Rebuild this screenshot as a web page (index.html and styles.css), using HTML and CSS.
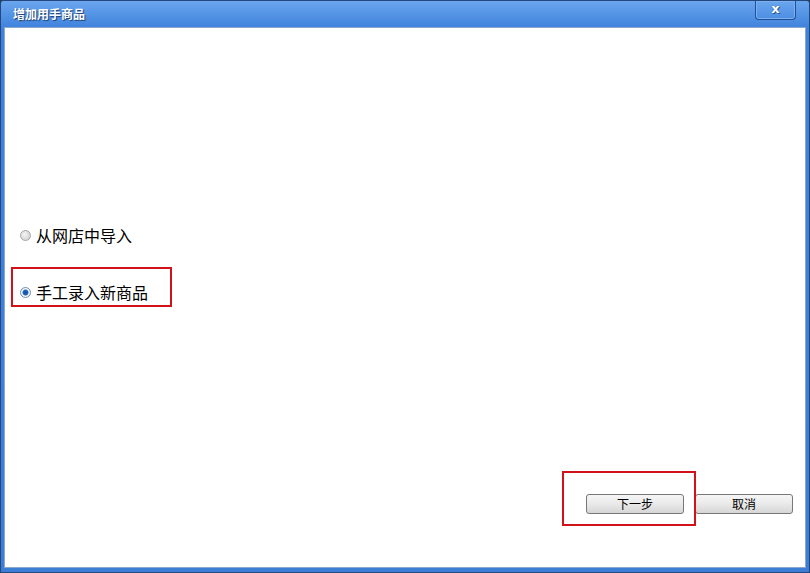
FILE: index.html
```html
<!DOCTYPE html>
<html>
<head>
<meta charset="utf-8">
<link rel="stylesheet" href="styles.css">
</head>
<body>
<div class="window">
  <div class="titlebar">
    <span class="title">增加用手商品</span>
    <span class="close">x</span>
  </div>
  <div class="content">
    <div class="options">
      <label class="option first"><span class="radio"></span><span>从网店中导入</span></label>
      <label class="option selected-box"><span class="radio checked"></span><span>手工录入新商品</span></label>
    </div>
    <div class="buttons">
      <div class="btn-wrap">
        <button class="btn">下一步</button>
        <span class="highlight"></span>
      </div>
      <button class="btn">取消</button>
    </div>
  </div>
</div>
</body>
</html>
```

FILE: styles.css
```css
* { box-sizing: border-box; }
html, body { margin: 0; padding: 0; }
body {
  width: 810px;
  height: 573px;
  overflow: hidden;
  font-family: "Noto Sans CJK SC", "Liberation Sans", sans-serif;
  background: #2d3a4a;
}
.window {
  width: 810px;
  height: 573px;
  display: flex;
  flex-direction: column;
  background: linear-gradient(to bottom, #6aa6ee 0px, #3f82dc 27px, #3c7dd6 100%);
  border: 1px solid #23477e;
  border-radius: 3px 3px 0 0;
  padding: 0 3px 4px 3px;
}
.titlebar {
  height: 26px;
  display: flex;
  align-items: center;
  justify-content: space-between;
  padding: 0 0 0 9px;
  position: relative;
}
.title {
  color: #ffffff;
  font-size: 12px;
  font-weight: bold;
  text-shadow: 1px 1px 1px #1c3c70;
  margin-top: -2px;
}
.close {
  width: 41px;
  height: 19px;
  margin-top: -7px;
  margin-right: 10px;
  border: 1px solid #1f4f96;
  border-top: none;
  border-radius: 0 0 4px 4px;
  box-shadow: inset 0 0 0 1px #7fb0ee;
  color: #ffffff;
  font-family: "DejaVu Sans", sans-serif;
  font-weight: bold;
  font-size: 13px;
  line-height: 15px;
  text-align: center;
  text-shadow: 0 0 1px #1c3c70, 1px 1px 0 #2a5aa0;
}
.content {
  flex: 1;
  background: #ffffff;
  border: 1px solid #8aa8cc;
  display: flex;
  flex-direction: column;
  position: relative;
}
.options {
  display: flex;
  flex-direction: column;
  padding: 196px 0 0 6px;
}
.option {
  display: flex;
  align-items: center;
  gap: 5px;
  font-size: 16px;
  color: #000;
  height: 22px;
}
.option.first {
  padding-left: 9px;
}
.selected-box {
  margin-top: 21px;
  width: 161px;
  height: 40px;
  border: 2px solid #d2121b;
  padding: 10px 0 0 7px;
}
.radio {
  width: 11px;
  height: 11px;
  border-radius: 50%;
  border: 1px solid #a4a4a4;
  background: radial-gradient(circle at 40% 40%, #f4f4f4 0%, #cfcfcf 90%);
  flex: none;
}
.radio.checked {
  border: 1px solid #6d8fb4;
  background: radial-gradient(circle, #144f9c 0px, #1f66bf 2.5px, #ffffff 3.5px, #dde8f4 5px);
}
.buttons {
  margin-top: auto;
  margin-bottom: 53px;
  display: flex;
  align-items: flex-start;
  justify-content: flex-end;
  padding-right: 12px;
}
.btn-wrap {
  position: relative;
  margin-right: 11px;
}
.btn {
  display: block;
  width: 98px;
  height: 20px;
  padding: 0;
  border: 1px solid #777;
  border-radius: 3px;
  background: linear-gradient(to bottom, #f6f6f6 0%, #e9e9e9 50%, #d6d6d6 100%);
  font-family: "Noto Sans CJK SC", sans-serif;
  font-size: 12px;
  line-height: 18px;
  color: #000;
}
.highlight {
  position: absolute;
  left: -24px;
  top: -23px;
  width: 134px;
  height: 55px;
  border: 2px solid #d2121b;
  pointer-events: none;
}
```
